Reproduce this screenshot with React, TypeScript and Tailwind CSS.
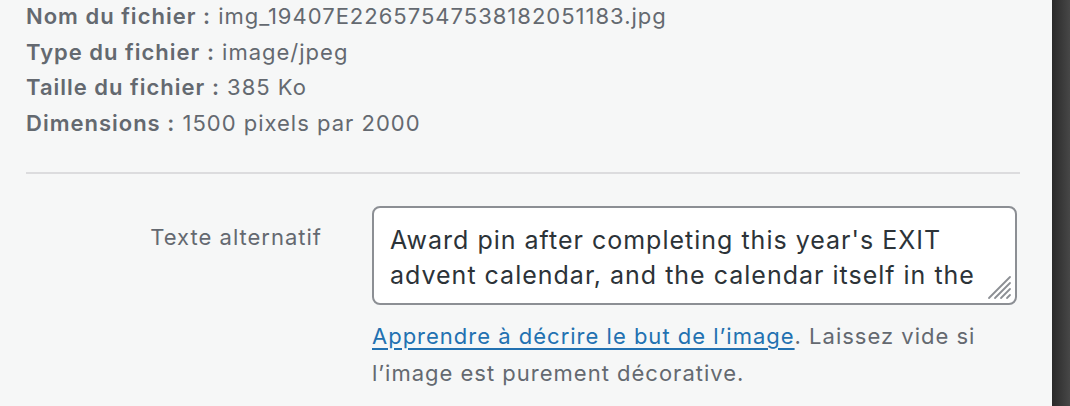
const details = [
  { label: "Nom du fichier :", value: "img_19407E22657547538182051183.jpg" },
  { label: "Type du fichier :", value: "image/jpeg" },
  { label: "Taille du fichier :", value: "385 Ko" },
  { label: "Dimensions :", value: "1500 pixels par 2000" },
];

const ResizeGrip = () => (
  <svg
    className="pointer-events-none absolute right-[3px] bottom-[3px]"
    width="25"
    height="25"
    viewBox="0 0 25 25"
    stroke="#8c8f94"
    strokeWidth="1.8"
    strokeLinecap="round"
  >
    <line x1="2" y1="23" x2="23" y2="2" />
    <line x1="8" y1="23" x2="23" y2="8" />
    <line x1="14" y1="23" x2="23" y2="14" />
    <line x1="20" y1="23" x2="23" y2="20" />
  </svg>
);

export default function App() {
  return (
    <div className="flex h-[406px] w-[1070px] overflow-hidden bg-[#f6f7f7] font-['Inter',sans-serif] text-[#646970]">
      <div className="flex-1 pl-[26px] pr-[32px]">
        <div className="-mt-[1px] text-[22px] leading-[35.7px] tracking-[1px]">
          {details.map((d) => (
            <div key={d.label}>
              <strong className="font-semibold">{d.label}</strong> {d.value}
            </div>
          ))}
        </div>

        <hr className="mt-[30px] border-t-[2px] border-[#dcdcde]" />

        <div className="mt-[32px] flex">
          <label className="w-[296px] pt-[16px] text-right text-[22px] leading-[30px] tracking-[1px]">
            Texte alternatif
          </label>
          <div className="ml-[50px] w-[645px]">
            <div className="relative h-[99px] rounded-[8px] border-[2px] border-[#8c8f94] bg-white">
              <textarea
                className="block h-[85px] w-full resize-none overflow-hidden bg-transparent pl-[16px] pr-[22px] pt-[15px] text-[25px] leading-[35px] tracking-[1px] text-[#2c3338] outline-none"
                defaultValue="Award pin after completing this year's EXIT advent calendar, and the calendar itself in the background."
              />
              <ResizeGrip />
            </div>
            <p className="mt-[13px] text-[22px] leading-[37px] tracking-[1px]">
              <a
                href="#"
                className="text-[#2271b1] underline decoration-[1.5px] underline-offset-[4px]"
              >
                Apprendre à décrire le but de l’image
              </a>
              . Laissez vide si l’image est purement décorative.
            </p>
          </div>
        </div>
      </div>
      <div className="w-[18px] bg-gradient-to-r from-[#2a2a2a] to-[#474747]" />
    </div>
  );
}
